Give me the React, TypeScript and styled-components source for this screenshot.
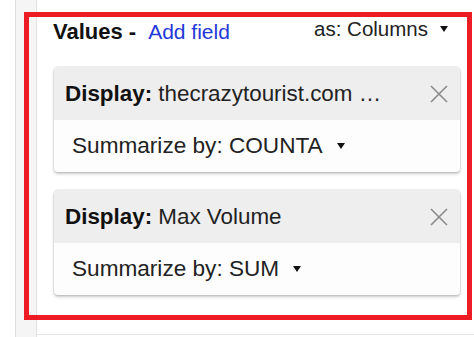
import React from "react";
import styled, { createGlobalStyle } from "styled-components";

const Global = createGlobalStyle`
  html, body { margin: 0; padding: 0; background: #ffffff; }
  body { font-family: "Liberation Sans", Arial, sans-serif; color: #222; }
`;

const Page = styled.div`
  position: relative;
  display: flex;
  width: 474px;
  height: 337px;
  overflow: hidden;
  background: #fff;
`;

const Rail = styled.div`
  margin-left: 15px;
  width: 20px;
  flex: none;
  background: #f5f5f5;
  border-left: 1px solid #dcdcdc;
  border-right: 1px solid #e2e2e2;
`;

const Panel = styled.div`
  flex: 1;
  display: flex;
  flex-direction: column;
  padding: 20px 14px 0 16px;
  height: 335px;
  box-sizing: border-box;
  border-bottom: 1px solid #e6e6e6;
`;

const TitleRow = styled.div`
  display: flex;
  align-items: flex-start;
  justify-content: space-between;
  height: 24px;
  margin-bottom: 23px;
`;

const Title = styled.div`
  display: flex;
  align-items: baseline;
  font-size: 21px;
  line-height: 24px;
`;

const Strong = styled.span`
  font-weight: bold;
  color: #111;
`;

const TitleStrong = styled(Strong)`
  font-size: 22px;
`;

const Link = styled.a`
  color: #2338d8;
  margin-left: 12px;
  text-decoration: none;
  cursor: pointer;
`;

const Select = styled.div`
  display: flex;
  align-items: center;
  gap: 12px;
  font-size: 20.5px;
  line-height: 24px;
  margin-top: -3px;
  padding-right: 12px;
  color: #222;
`;

const Caret = styled.span`
  display: inline-block;
  width: 0;
  height: 0;
  border-left: 4px solid transparent;
  border-right: 4px solid transparent;
  border-top: 6px solid #111;
`;

const Cards = styled.div`
  display: flex;
  flex-direction: column;
  gap: 18px;
  margin-left: 1px;
`;

const Card = styled.div`
  border-radius: 4px;
  background: #fdfdfd;
  box-shadow: 0 0 0 1px rgba(0, 0, 0, 0.06), 0 2px 3px rgba(0, 0, 0, 0.22);
  overflow: hidden;
`;

const CardHeader = styled.div`
  display: flex;
  align-items: center;
  justify-content: space-between;
  height: 53px;
  padding: 0 12px 0 11px;
  background: #eeeeee;
  font-size: 22.4px;
`;

const HeaderText = styled.div`
  white-space: nowrap;
  overflow: hidden;
  color: #222;
`;

const Close = styled.button`
  border: 0;
  background: transparent;
  padding: 0;
  width: 18px;
  height: 18px;
  display: flex;
  align-items: center;
  justify-content: center;
  cursor: pointer;
`;

const CardBody = styled.div`
  display: flex;
  align-items: center;
  gap: 14px;
  height: 52px;
  padding: 0 18px;
  font-size: 22.6px;
  color: #222;
`;

const Annotation = styled.div`
  position: absolute;
  left: 24px;
  top: 12px;
  width: 448px;
  height: 308px;
  box-sizing: border-box;
  border: 5px solid #ed1c24;
  pointer-events: none;
`;

const XIcon = () => (
  <svg width="18" height="18" viewBox="0 0 18 18">
    <path d="M1 1 L17 17 M17 1 L1 17" stroke="#8a8a8a" strokeWidth="1.6" fill="none" />
  </svg>
);

type Field = { name: string; summarize: string };

const fields: Field[] = [
  { name: "thecrazytourist.com \u2026", summarize: "COUNTA" },
  { name: "Max Volume", summarize: "SUM" },
];

export default function App() {
  return (
    <>
      <Global />
      <Page>
        <Rail />
        <Panel>
          <TitleRow>
            <Title>
              <TitleStrong>Values -</TitleStrong>
              <Link>Add field</Link>
            </Title>
            <Select>
              <span>as: Columns</span>
              <Caret />
            </Select>
          </TitleRow>
          <Cards>
            {fields.map((f) => (
              <Card key={f.name}>
                <CardHeader>
                  <HeaderText>
                    <Strong>Display:</Strong> {f.name}
                  </HeaderText>
                  <Close aria-label="Remove">
                    <XIcon />
                  </Close>
                </CardHeader>
                <CardBody>
                  <span>Summarize by: {f.summarize}</span>
                  <Caret />
                </CardBody>
              </Card>
            ))}
          </Cards>
        </Panel>
        <Annotation />
      </Page>
    </>
  );
}
